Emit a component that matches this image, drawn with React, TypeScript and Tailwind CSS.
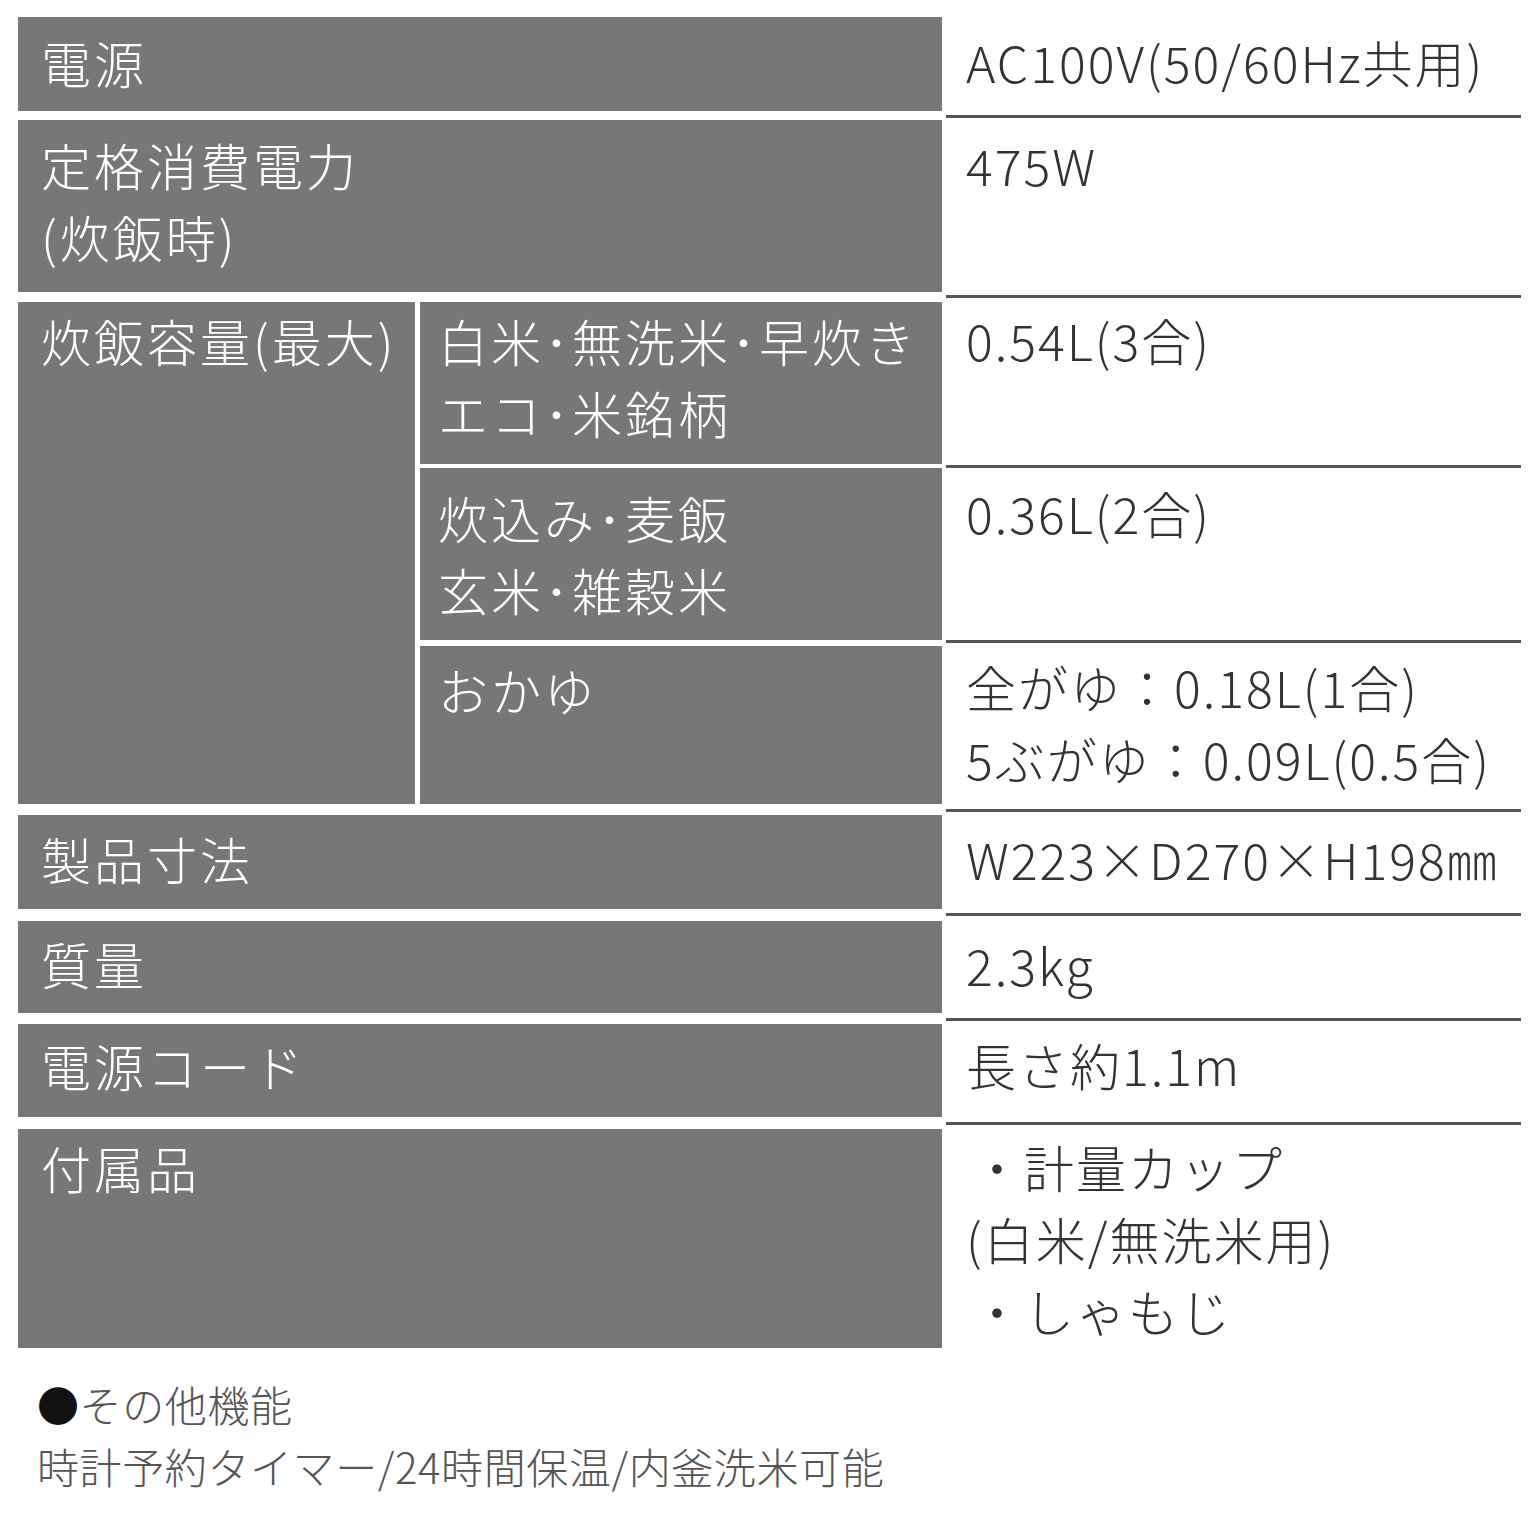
import React from "react";

const jp = "font-['Noto_Sans_CJK_JP','Noto_Sans',sans-serif]";

// left label cell: gray box with white text
function Label({ text, cls }: { text: React.ReactNode; cls: string }) {
  return (
    <div className={`bg-[#777777] text-white font-light text-[50px] leading-[72px] tracking-[3px] ${cls}`}>
      {text}
    </div>
  );
}

// right value cell: white with bottom rule
function Value({ children, cls }: { children: React.ReactNode; cls: string }) {
  return (
    <div className={`w-[575px] text-[#333333] font-light text-[50px] leading-[72px] tracking-[2px] pl-[20px] ${cls}`}>
      {children}
    </div>
  );
}

export default function App() {
  return (
    <div className={`w-[1536px] h-[1536px] bg-white pt-[17px] pl-[18px] ${jp}`}>
      {/* 電源 */}
      <div className="flex">
        <div className="w-[924px] pb-[7px]">
          <Label text="電源" cls="h-[94px] pt-[9px] pl-[23px]" />
        </div>
        <div className="w-[4px]" />
        <Value cls="border-b-[3px] border-[#555555] pt-[8px]">AC100V(50/60Hz共用)</Value>
      </div>

      {/* 定格消費電力 */}
      <div className="flex">
        <div className="w-[924px] pt-[2px] pb-[6px]">
          <Label
            text={
              <>
                定格消費電力
                <br />
                (炊飯時)
              </>
            }
            cls="h-[172px] pt-[8px] pl-[23px]"
          />
        </div>
        <div className="w-[4px]" />
        <Value cls="border-b-[3px] border-[#555555] pt-[10px]">475W</Value>
      </div>

      {/* 炊飯容量 */}
      <div className="flex">
        <div className="w-[397px] pt-[4px] pb-[8px] flex flex-col">
          <Label text="炊飯容量(最大)" cls="flex-1 pt-[2px] pl-[23px]" />
        </div>
        <div className="w-[5px]" />
        <div className="flex flex-col">
          <div className="flex">
            <div className="w-[522px] pt-[4px] pb-[4px]">
              <Label
                text={
                  <>
                    白米･無洗米･早炊き
                    <br />
                    エコ･米銘柄
                  </>
                }
                cls="h-[162px] pt-[2px] pl-[18px]"
              />
            </div>
            <div className="w-[4px]" />
            <Value cls="border-b-[3px] border-[#555555] pt-[5px]">0.54L(3合)</Value>
          </div>
          <div className="flex">
            <div className="w-[522px] pb-[3px]">
              <Label
                text={
                  <>
                    炊込み･麦飯
                    <br />
                    玄米･雑穀米
                  </>
                }
                cls="h-[172px] pt-[13px] pl-[18px]"
              />
            </div>
            <div className="w-[4px]" />
            <Value cls="border-b-[3px] border-[#555555] pt-[8px]">0.36L(2合)</Value>
          </div>
          <div className="flex">
            <div className="w-[522px] pt-[3px] pb-[8px]">
              <Label text="おかゆ" cls="h-[158px] pt-[7px] pl-[18px]" />
            </div>
            <div className="w-[4px]" />
            <Value cls="border-b-[3px] border-[#555555] pt-[7px]">
              全がゆ：0.18L(1合)
              <br />
              5ぶがゆ：0.09L(0.5合)
            </Value>
          </div>
        </div>
      </div>

      {/* 製品寸法 */}
      <div className="flex">
        <div className="w-[924px] pt-[3px] pb-[7px]">
          <Label text="製品寸法" cls="h-[94px] pt-[7px] pl-[23px]" />
        </div>
        <div className="w-[4px]" />
        <Value cls="border-b-[3px] border-[#555555] pt-[10px]">W223×D270×H198㎜</Value>
      </div>

      {/* 質量 */}
      <div className="flex">
        <div className="w-[924px] pt-[5px] pb-[8px]">
          <Label text="質量" cls="h-[92px] pt-[6px] pl-[23px]" />
        </div>
        <div className="w-[4px]" />
        <Value cls="border-b-[3px] border-[#555555] pt-[12px]">2.3kg</Value>
      </div>

      {/* 電源コード */}
      <div className="flex">
        <div className="w-[924px] pt-[3px] pb-[8px]">
          <Label text="電源コード" cls="h-[93px] pt-[5px] pl-[23px]" />
        </div>
        <div className="w-[4px]" />
        <Value cls="border-b-[3px] border-[#555555] pt-[7px]">長さ約1.1m</Value>
      </div>

      {/* 付属品 */}
      <div className="flex">
        <div className="w-[924px] pt-[4px]">
          <Label text="付属品" cls="h-[219px] pt-[2px] pl-[23px]" />
        </div>
        <div className="w-[4px]" />
        <Value cls="pt-[5px]">
          <div className="pl-[6px]">・計量カップ</div>
          <div>(白米/無洗米用)</div>
          <div className="pl-[6px]">・しゃもじ</div>
        </Value>
      </div>

      {/* その他機能 */}
      <div className="pt-[25px] pl-[19px] text-[42px] leading-[62px] font-light text-[#555555] tracking-[0.6px]">
        <div>
          <span className="text-[#111111]">●</span>その他機能
        </div>
        <div>時計予約タイマー/24時間保温/内釜洗米可能</div>
      </div>
    </div>
  );
}
